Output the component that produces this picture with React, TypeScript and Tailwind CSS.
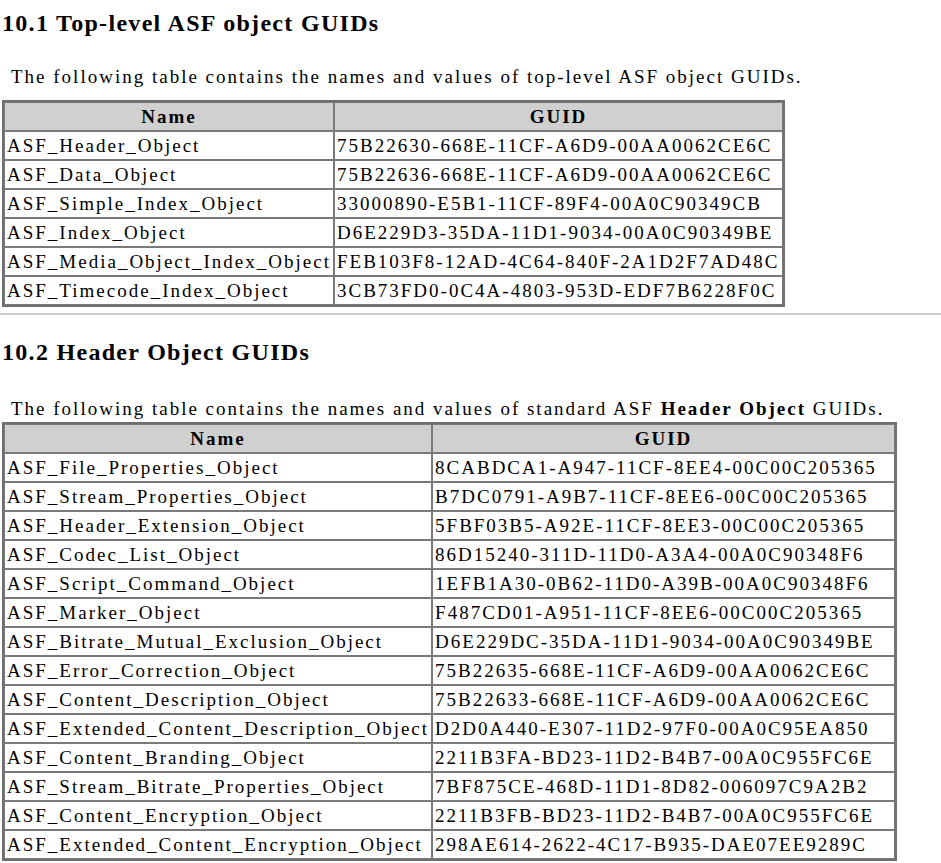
const topLevel: [string, string][] = [
  ['ASF_Header_Object', '75B22630-668E-11CF-A6D9-00AA0062CE6C'],
  ['ASF_Data_Object', '75B22636-668E-11CF-A6D9-00AA0062CE6C'],
  ['ASF_Simple_Index_Object', '33000890-E5B1-11CF-89F4-00A0C90349CB'],
  ['ASF_Index_Object', 'D6E229D3-35DA-11D1-9034-00A0C90349BE'],
  ['ASF_Media_Object_Index_Object', 'FEB103F8-12AD-4C64-840F-2A1D2F7AD48C'],
  ['ASF_Timecode_Index_Object', '3CB73FD0-0C4A-4803-953D-EDF7B6228F0C'],
];

const headerObjects: [string, string][] = [
  ['ASF_File_Properties_Object', '8CABDCA1-A947-11CF-8EE4-00C00C205365'],
  ['ASF_Stream_Properties_Object', 'B7DC0791-A9B7-11CF-8EE6-00C00C205365'],
  ['ASF_Header_Extension_Object', '5FBF03B5-A92E-11CF-8EE3-00C00C205365'],
  ['ASF_Codec_List_Object', '86D15240-311D-11D0-A3A4-00A0C90348F6'],
  ['ASF_Script_Command_Object', '1EFB1A30-0B62-11D0-A39B-00A0C90348F6'],
  ['ASF_Marker_Object', 'F487CD01-A951-11CF-8EE6-00C00C205365'],
  ['ASF_Bitrate_Mutual_Exclusion_Object', 'D6E229DC-35DA-11D1-9034-00A0C90349BE'],
  ['ASF_Error_Correction_Object', '75B22635-668E-11CF-A6D9-00AA0062CE6C'],
  ['ASF_Content_Description_Object', '75B22633-668E-11CF-A6D9-00AA0062CE6C'],
  ['ASF_Extended_Content_Description_Object', 'D2D0A440-E307-11D2-97F0-00A0C95EA850'],
  ['ASF_Content_Branding_Object', '2211B3FA-BD23-11D2-B4B7-00A0C955FC6E'],
  ['ASF_Stream_Bitrate_Properties_Object', '7BF875CE-468D-11D1-8D82-006097C9A2B2'],
  ['ASF_Content_Encryption_Object', '2211B3FB-BD23-11D2-B4B7-00A0C955FC6E'],
  ['ASF_Extended_Content_Encryption_Object', '298AE614-2622-4C17-B935-DAE07EE9289C'],
];

function GuidTable({ rows, wide }: { rows: [string, string][]; wide?: boolean }) {
  return (
    <table
      className={
        'border-separate border-spacing-0 border-2 border-[#6e6e6e] text-[19px] tracking-[2px] ' +
        (wide ? 'w-[895px]' : 'w-[783px]')
      }
    >
      <thead>
        <tr className="bg-[#d0d0d0]">
          <th
            className={
              'border border-[#7a7a7a] px-[2px] h-[29px] leading-[27px] font-bold text-center ' +
              (wide ? 'w-[424px]' : 'w-[328px]')
            }
          >
            Name
          </th>
          <th className="border border-[#7a7a7a] px-[2px] h-[29px] leading-[27px] font-bold text-center">GUID</th>
        </tr>
      </thead>
      <tbody>
        {rows.map(([name, guid]) => (
          <tr key={name}>
            <td className="border border-[#7a7a7a] px-[2px] h-[29px] leading-[27px] whitespace-nowrap">{name}</td>
            <td className="border border-[#7a7a7a] px-[2px] h-[29px] leading-[27px] whitespace-nowrap">{guid}</td>
          </tr>
        ))}
      </tbody>
    </table>
  );
}

export default function App() {
  return (
    <div className="w-[941px] h-[863px] overflow-hidden bg-white text-black font-[Liberation_Serif,Times_New_Roman,serif]">
      <div className="pl-[2px]">
        {/* 10.1 */}
        <h2 className="text-[24px] font-bold tracking-[1.3px] leading-[47px]">10.1 Top-level ASF object GUIDs</h2>
        <p className="mt-[15px] pl-[9px] text-[19px] tracking-[2px] leading-[30px]">
          The following table contains the names and values of top-level ASF object GUIDs.
        </p>
        <div className="mt-[8px]">
          <GuidTable rows={topLevel} />
        </div>
      </div>

      <hr className="mt-[6px] border-t-2 border-[#cfcfcf]" />

      <div className="pl-[2px]">
        {/* 10.2 */}
        <h2 className="mt-[14px] text-[24px] font-bold tracking-[1.3px] leading-[47px]">10.2 Header Object GUIDs</h2>
        <p className="mt-[19px] pl-[9px] text-[19px] tracking-[2px] leading-[28px]">
          The following table contains the names and values of standard ASF <b>Header Object</b> GUIDs.
        </p>
        <div className="-mt-[1px]">
          <GuidTable rows={headerObjects} wide />
        </div>
      </div>
    </div>
  );
}
